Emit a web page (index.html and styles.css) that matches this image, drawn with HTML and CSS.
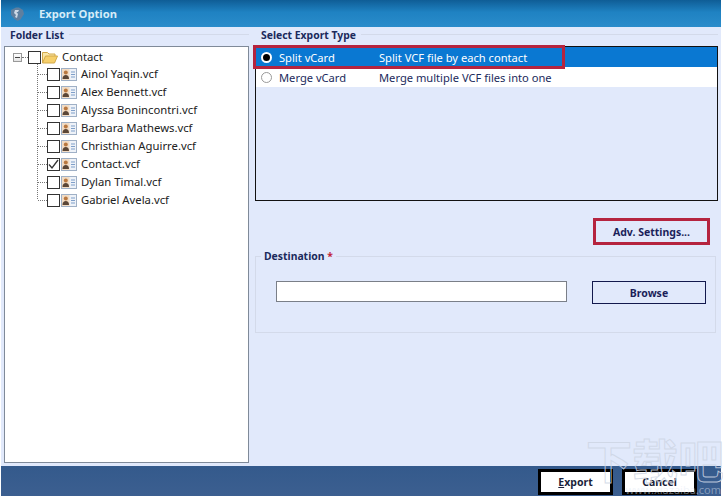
FILE: index.html
```html
<!DOCTYPE html>
<html lang="en">
<head>
<meta charset="utf-8">
<title>Export Option</title>
<link rel="stylesheet" href="styles.css">
</head>
<body>
<div class="app">
  <header class="titlebar">
    <svg class="logo" width="16" height="16" viewBox="0 0 16 16"><path d="M2 4l5-2.500h3l4 2.500 1 4-3.500 5.500-3 1.500-3-2L2 9z" fill="#5f7f9f"/><path d="M6 4h4L9 6H7.500l1.500 2-1 4-2-1 1-2-2-2z" fill="#cdd9e6"/></svg>
    <span class="title">Export Option</span>
  </header>
  <main class="main">
    <section class="left">
      <div class="legend"><span>Folder List</span></div>
      <div class="treebox">
        <div class="root">
          <span class="expander"></span>
          <span class="check"></span>
          <svg class="folder" width="16" height="13" viewBox="0 0 16 13"><path d="M.5 12V1.500h5L7 3h6v2" fill="#f9e6a8" stroke="#d2a94a"/><path d="M.5 12l3-7h12l-3 7z" fill="#f6cf6a" stroke="#d2a94a"/></svg>
          <span class="rootlabel">Contact</span>
        </div>
        <ul class="tree">
          <li><span class="check"></span><svg class="vcf"><use href="#card"/></svg><span>Ainol Yaqin.vcf</span></li>
          <li><span class="check"></span><svg class="vcf"><use href="#card"/></svg><span>Alex Bennett.vcf</span></li>
          <li><span class="check"></span><svg class="vcf"><use href="#card"/></svg><span>Alyssa Bonincontri.vcf</span></li>
          <li><span class="check"></span><svg class="vcf"><use href="#card"/></svg><span>Barbara Mathews.vcf</span></li>
          <li><span class="check"></span><svg class="vcf"><use href="#card"/></svg><span>Christhian Aguirre.vcf</span></li>
          <li><span class="check"><svg width="11" height="11" viewBox="0 0 11 11"><path d="M1 5.500l3 3.500 6-8" fill="none" stroke="#333" stroke-width="1.300"/></svg></span><svg class="vcf"><use href="#card"/></svg><span>Contact.vcf</span></li>
          <li><span class="check"></span><svg class="vcf"><use href="#card"/></svg><span>Dylan Timal.vcf</span></li>
          <li><span class="check"></span><svg class="vcf"><use href="#card"/></svg><span>Gabriel Avela.vcf</span></li>
        </ul>
      </div>
    </section>
    <section class="right">
      <div class="legend"><span>Select Export Type</span></div>
      <div class="typebox">
        <div class="option selected">
          <span class="radio on"></span><span class="optname">Split vCard</span><span>Split VCF file by each contact</span>
        </div>
        <div class="option">
          <span class="radio"></span><span class="optname">Merge vCard</span><span>Merge multiple VCF files into one</span>
        </div>
      </div>
      <div class="advrow"><button class="btn adv">Adv. Settings...</button></div>
      <fieldset class="dest">
        <legend>Destination <em>*</em></legend>
        <div class="destrow">
          <input class="path" type="text" aria-label="Destination">
          <button class="btn browse">Browse</button>
        </div>
      </fieldset>
    </section>
  </main>
  <footer class="footer">
    <button class="fbtn"><u>E</u>xport</button>
    <button class="fbtn">Cancel</button>
  </footer>
  <div class="mark">下载吧</div>
  <div class="markurl">www.xiazaiba.com</div>
</div>
<svg class="defs" width="0" height="0">
  <symbol id="card" viewBox="0 0 16 13">
    <rect x=".5" y=".5" width="15" height="12" fill="#eef2f8" stroke="#9fb0c6"/>
    <rect x="1" y="1" width="7.500" height="11" fill="#f2dcc4"/>
    <circle cx="4.800" cy="4.500" r="2" fill="#b9783f"/>
    <path d="M1.500 11c0-3 1.500-4 3.300-4s3.200 1 3.200 4z" fill="#5b4636"/>
    <path d="M10 4h4M10 6.500h4M10 9h4" stroke="#7f9fc9"/>
  </symbol>
</svg>
</body>
</html>
```
FILE: styles.css
```css
*, *::before, *::after { box-sizing: border-box; }
html, body { margin: 0; padding: 0; }
body { width: 723px; height: 496px; overflow: hidden; background: #fff; font-family: "Noto Sans", sans-serif; font-size: 11.150px; color: #1b1f5a; }
.app { position: relative; width: 720px; height: 496px; margin-left: 1px; display: flex; flex-direction: column; background: #e1e9fb; }
.titlebar { height: 27px; flex: none; display: flex; align-items: center; padding-left: 8px; gap: 14px; background: linear-gradient(#0f5d96, #1f82c2 45%, #2a8ccb); }
.logo { flex: none; }
.title { color: #d5ecf8; font-weight: 700; font-size: 11.200px; }
.main { flex: 1; display: flex; min-height: 0; padding: 0 3px; gap: 6px; }
.left { width: 245px; flex: none; display: flex; flex-direction: column; padding-bottom: 3px; }
.right { flex: 1; display: flex; flex-direction: column; }
.legend { height: 15px; margin-bottom: 4px; flex: none; display: flex; align-items: center; font-weight: 700; font-size: 10.400px; color: #1b2a5c; padding-left: 6px; }
.legend::after { content: ""; flex: 1; height: 1px; background: #d3daea; margin-left: 5px; }
.treebox { flex: 1; background: #fff; border: 1px solid #7f8a99; padding: 1px 0 0 8px; color: #222; font-size: 11.300px; }
.root { height: 16px; display: flex; align-items: center; }
.expander { width: 9px; height: 9px; margin-top: 2px; border: 1px solid #999; position: relative; margin-right: 6px; background: linear-gradient(#fff, #e4e4e4); }
.expander::before { content: ""; position: absolute; left: 1px; top: 3px; width: 5px; height: 1px; background: #444; }
.expander::after { content: ""; position: absolute; left: 8px; top: 3px; width: 6px; border-top: 1px dotted #777; }
.check { width: 13px; height: 13px; margin-top: 2px; flex: none; border: 1px solid #333; background: #fff; display: flex; align-items: center; justify-content: center; }
.folder { margin: 2px 4px 0 1px; flex: none; }
.tree { list-style: none; margin: 0 0 0 24px; padding: 0; border-left: 1px dotted #777; height: 135px; }
.tree li { height: 18px; display: flex; align-items: center; position: relative; padding-left: 9px; gap: 1px; }
.tree li::before { content: ""; position: absolute; left: 0; top: 10px; width: 9px; border-top: 1px dotted #777; }
.vcf { width: 16px; height: 13px; margin-top: 2px; flex: none; margin-right: 3px; }
.typebox { height: 155px; flex: none; background: #e1e9fb; border: 1px solid #111; }
.option { height: 20px; display: flex; align-items: center; background: #fff; padding-left: 5px; color: #1b2a5c; }
.option.selected { background: #0a78d2; color: #fff; position: relative; }
.option.selected::after { content: ""; position: absolute; left: -3px; top: -2px; width: 312px; height: 24px; border: 3px solid #b5243f; }
.radio { width: 11px; height: 11px; flex: none; border-radius: 50%; border: 1px solid #999; background: #fff; margin-right: 7px; }
.radio.on { background: #000; border: 2px solid #fff; }
.optname { width: 100px; flex: none; }
.advrow { display: flex; justify-content: flex-end; padding: 17px 8px 4px 0; }
.btn { font: 700 10.500px "Noto Sans", sans-serif; color: #1b1f5a; background: #e1e9fb; }
.adv { width: 117px; height: 27px; border: 3px solid #b5243f; padding: 0; }
.dest { margin: 0 2px 0 0; height: 84px; border: 1px solid #d3daea; padding: 0 0 0 20px; min-width: 0; }
.dest legend { font-weight: 700; font-size: 10.400px; color: #1b2a5c; padding: 0 3px; margin-left: -15px; line-height: 15px; }
.dest em { color: #c0243a; font-style: normal; }
.destrow { display: flex; align-items: flex-start; margin-top: 17px; }
.path { width: 291px; height: 21px; background: #fff; border: 1px solid #7a7f88; padding: 0; }
.browse { width: 114px; height: 23px; margin-left: 25px; border: 1px solid #13194d; padding: 0; }
.footer { height: 30px; flex: none; display: flex; justify-content: flex-end; align-items: flex-end; gap: 9px; padding: 0 24px 1px 0; background: linear-gradient(#345a8c, #3c5f90); }
.fbtn { width: 75px; height: 26px; background: #fff; border: 3px solid #000; padding: 0; font: 700 10.500px "Noto Sans", sans-serif; color: #1b1f3a; }
.mark { position: absolute; right: -3px; top: 431px; width: 138px; color: transparent; -webkit-text-stroke: 1px rgba(205,213,228,.85); font: 700 46px/54px "Noto Sans CJK SC", sans-serif; white-space: nowrap; overflow: hidden; pointer-events: none; }
.markurl { position: absolute; right: 0; top: 484px; color: rgba(225,232,245,.45); font-size: 11px; line-height: 12px; pointer-events: none; }
.defs { position: absolute; }
```
